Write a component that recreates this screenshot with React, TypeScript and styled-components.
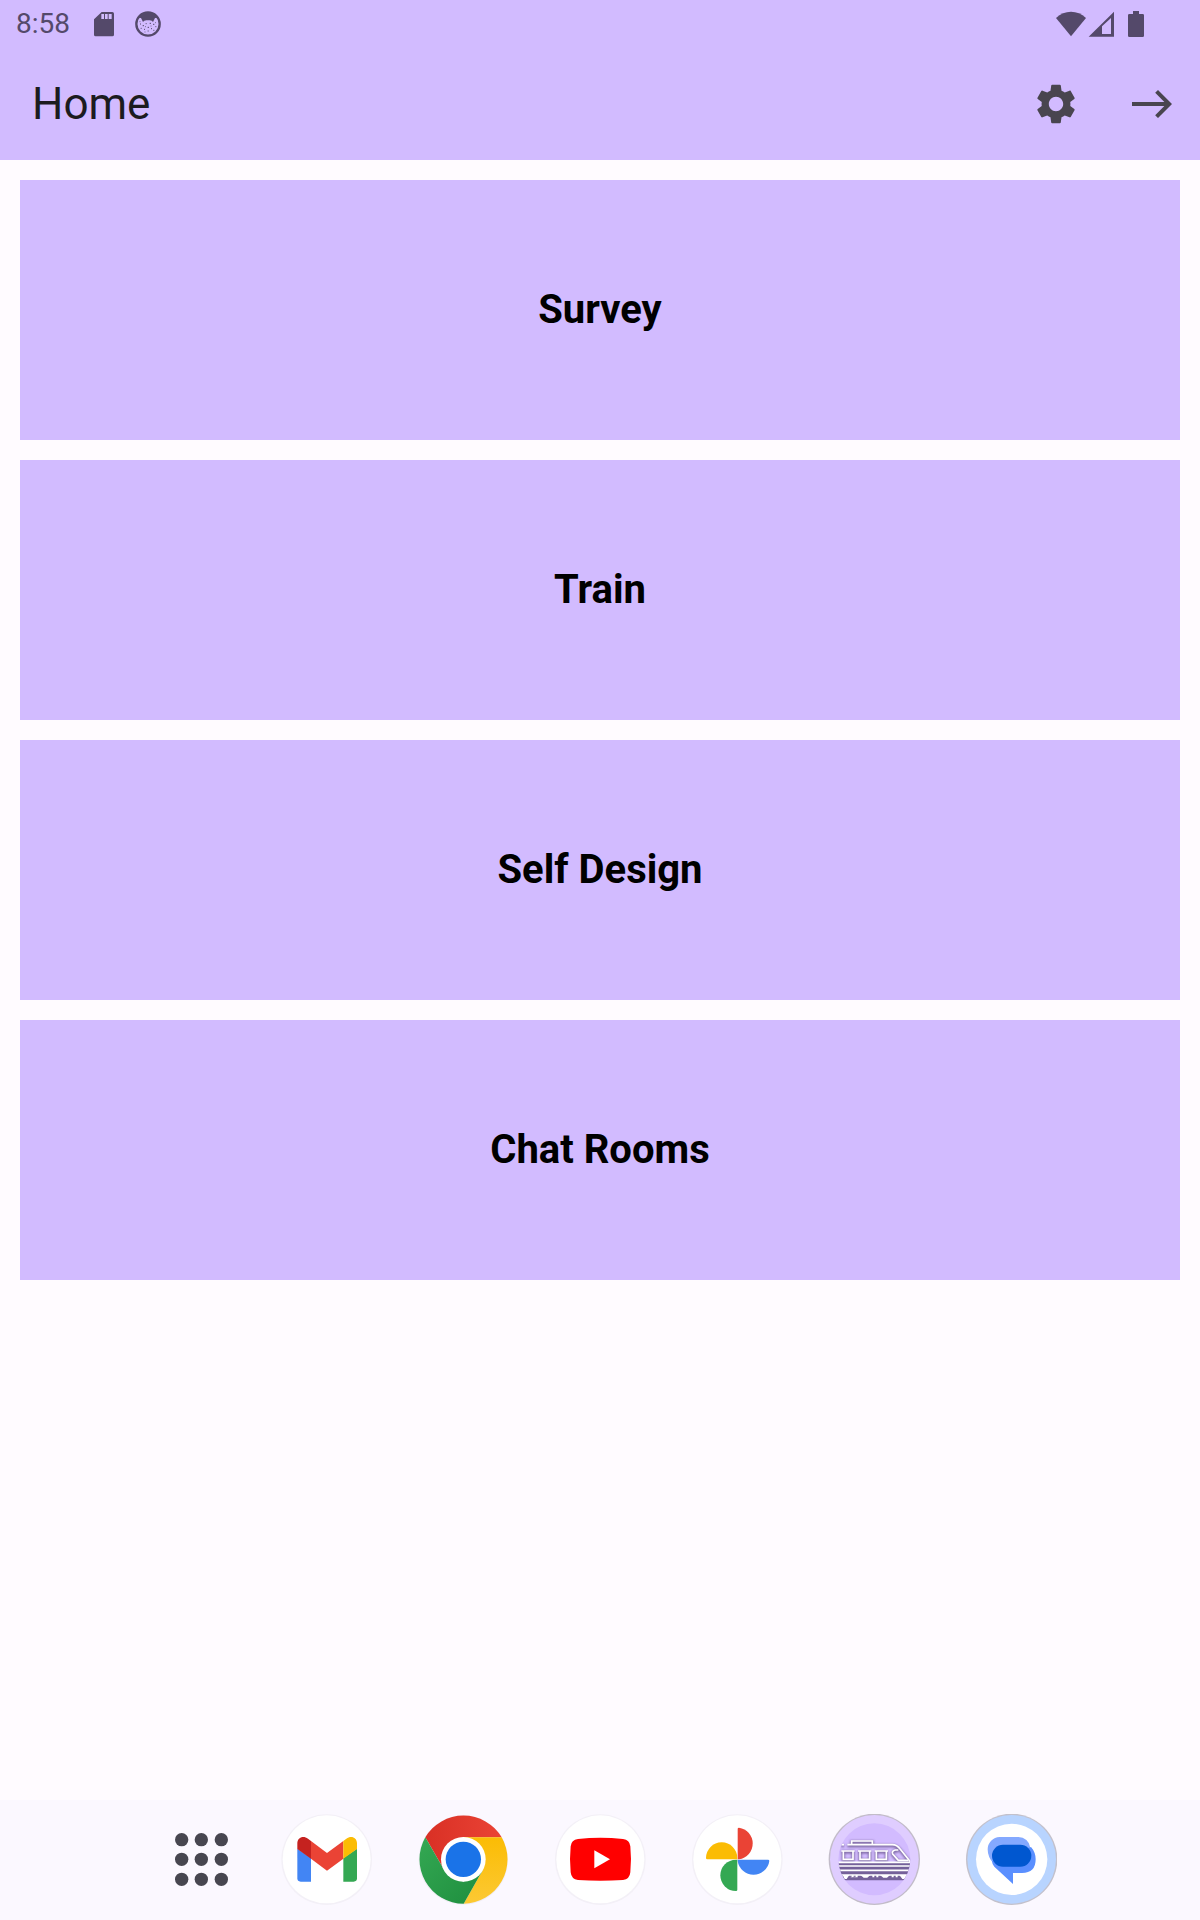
import React from "react";
import styled, { createGlobalStyle } from "styled-components";

const GlobalStyle = createGlobalStyle`
  *, *::before, *::after { box-sizing: border-box; }
  body {
    margin: 0;
    background: #fffbff;
    font-family: Roboto, "Noto Sans", sans-serif;
  }
`;

const Screen = styled.div`
  display: flex;
  flex-direction: column;
  min-height: 100vh;
`;

const Header = styled.header`
  background: #d2bbff;
`;

const StatusBar = styled.div`
  display: flex;
  align-items: center;
  justify-content: space-between;
  height: 48px;
  padding: 0 56px 0 16px;
  color: #54496a;
`;

const StatusGroup = styled.div<{ $gap: number }>`
  display: flex;
  align-items: center;
  gap: ${(p) => p.$gap}px;
`;

const Clock = styled.time`
  font-size: 28px;
  line-height: 32px;
`;

const Glyph = styled.svg<{ $w: number; $h: number }>`
  display: block;
  flex: none;
  width: ${(p) => p.$w}px;
  height: ${(p) => p.$h}px;
  fill: currentColor;
`;

const AppBar = styled.div`
  display: flex;
  align-items: center;
  justify-content: space-between;
  height: 112px;
  padding-left: 32px;
`;

const Title = styled.h1`
  margin: 0;
  color: #1c1b1f;
  font-size: 44px;
  font-weight: 400;
  line-height: 56px;
`;

const Actions = styled.div`
  display: flex;
`;

const IconButton = styled.button`
  display: flex;
  align-items: center;
  justify-content: center;
  width: 96px;
  height: 96px;
  padding: 0;
  border: 0;
  background: none;
  color: #49454f;
  cursor: pointer;
`;

const Menu = styled.main`
  display: flex;
  flex: 1;
  flex-direction: column;
  gap: 20px;
  padding: 20px;
`;

const MenuCard = styled.button`
  height: 260px;
  padding: 0;
  border: 0;
  background: #d2bbff;
  color: #000;
  font-family: inherit;
  font-size: 40px;
  font-weight: 700;
  line-height: 48px;
  cursor: pointer;
`;

const Dock = styled.nav`
  display: flex;
  align-items: center;
  justify-content: center;
  gap: 45px;
  height: 120px;
  padding-left: 24px;
  background: #fbf8ff;
`;

const DockButton = styled.button`
  display: block;
  padding: 0;
  border: 0;
  background: none;
  cursor: pointer;
`;

const Disc = ({ cx, cy, fill = "#fff" }: { cx: number; cy: number; fill?: string }) => (
  <>
    <circle cx={cx} cy={cy + 1} r="136" fill="#f3f0f7" />
    <circle cx={cx} cy={cy} r="132" fill={fill} />
  </>
);

const SdCard = () => (
  <Glyph $w={20} $h={26} viewBox="282 33 60 78" aria-hidden="true">
    <path
      fillRule="evenodd"
      d="M305 36H337Q342 36 342 41V104Q342 109 337 109H287Q282 109 282 104V58ZM304 42V57H312V42ZM315 42V57H323V42ZM326 42V57H335V42Z"
    />
  </Glyph>
);

const Face = () => (
  <Glyph $w={26} $h={26} viewBox="405 33 78 78" aria-hidden="true">
    <circle cx="444" cy="72" r="35" fill="none" stroke="currentColor" strokeWidth="7" />
    <path d="M415 53Q426 37 444 37T473 53L465 54L459 66Q456 59 444 61Q432 59 429 66L423 54Z" />
    <path
      d="M420 72h3M428 77h4M437 71h3M449 70h4M459 73h4M466 80h3M422 85h3M432 88h3M443 82h4M443 93h3M453 86h3M460 91h3M434 96h2M466 68h2M419 65h2M452 78h2M436 80h2"
      stroke="currentColor"
      strokeWidth="3"
    />
  </Glyph>
);

const Wifi = () => (
  <Glyph $w={30} $h={26} viewBox="168 33 90 78" aria-hidden="true">
    <path d="M168 54Q188 35 213 35T258 54L213 109Z" />
  </Glyph>
);

const Signal = () => (
  <Glyph $w={26} $h={26} viewBox="264 33 78 78" aria-hidden="true">
    <path fillRule="evenodd" d="M266 110L342 35V110ZM306 79V102H333V54Z" />
  </Glyph>
);

const Battery = () => (
  <Glyph $w={16} $h={26} viewBox="384 33 48 78" aria-hidden="true">
    <path d="M399 33H417V42H428Q432 42 432 46V107Q432 111 428 111H388Q384 111 384 107V46Q384 42 388 42H399Z" />
  </Glyph>
);

const Gear = () => (
  <Glyph $w={48} $h={48} viewBox="0 0 24 24" aria-hidden="true">
    <path d="M19.14 12.94c.04-.3.06-.61.06-.94 0-.32-.02-.64-.07-.94l2.03-1.58c.18-.14.23-.41.12-.61l-1.92-3.32c-.12-.22-.37-.29-.59-.22l-2.39.96c-.5-.38-1.03-.7-1.62-.94l-.36-2.54c-.04-.24-.24-.41-.48-.41h-3.84c-.24 0-.43.17-.47.41l-.36 2.54c-.59.24-1.13.57-1.62.94l-2.39-.96c-.22-.08-.47 0-.59.22L2.74 8.87c-.12.21-.08.47.12.61l2.03 1.58c-.05.3-.09.63-.09.94s.02.64.07.94l-2.03 1.58c-.18.14-.23.41-.12.61l1.92 3.32c.12.22.37.29.59.22l2.39-.96c.5.38 1.03.7 1.62.94l.36 2.54c.05.24.24.41.48.41h3.84c.24 0 .44-.17.47-.41l.36-2.54c.59-.24 1.13-.56 1.62-.94l2.39.96c.22.08.47 0 .59-.22l1.92-3.32c.12-.22.07-.47-.12-.61l-2.01-1.58zM12 15.6c-1.98 0-3.6-1.62-3.6-3.6s1.62-3.6 3.6-3.6 3.6 1.62 3.6 3.6-1.62 3.6-3.6 3.6z" />
  </Glyph>
);

const East = () => (
  <Glyph $w={48} $h={48} viewBox="0 0 24 24" aria-hidden="true">
    <path d="M15 5l-1.41 1.41L18.17 11H2v2h16.17l-4.59 4.59L15 19l7-7-7-7z" />
  </Glyph>
);

const AllApps = () => (
  <Glyph $w={68} $h={92} viewBox="21 72 204 276" aria-hidden="true">
    <g fill="#474650">
      {[149, 208, 268].map((y) =>
        [65, 124, 184].map((x) => <circle key={`${x}-${y}`} cx={x} cy={y} r="20" />)
      )}
    </g>
  </Glyph>
);

const Gmail = () => (
  <Glyph $w={92} $h={92} viewBox="360 72 276 276" aria-hidden="true">
    <Disc cx={500} cy={208} />
    <path fill="#4285f4" d="M412 176L453 204V275H422Q412 275 412 265Z" />
    <path fill="#34a853" d="M591 176L550 204V275H581Q591 275 591 265Z" />
    <path fill="#ea4335" d="M453 153L501 189L550 153V206L501 242L453 206Z" />
    <path fill="#c5221f" d="M412 177V160C412 142 430 135 444 146L453 153V206Z" />
    <path fill="#fbbc04" d="M591 177V160C591 142 573 135 559 146L550 153V206Z" />
  </Glyph>
);

const Chrome = () => (
  <Glyph $w={92} $h={92} viewBox="51 72 276 276" aria-hidden="true">
    <defs>
      <linearGradient id="chromeRed" x1="0" x2="1">
        <stop offset="0" stopColor="#d93025" />
        <stop offset="1" stopColor="#ea4335" />
      </linearGradient>
      <linearGradient id="chromeYellow" x1="0" y1="1" x2="0" y2="0">
        <stop offset="0" stopColor="#fcc934" />
        <stop offset="1" stopColor="#fbbc04" />
      </linearGradient>
      <linearGradient id="chromeGreen" x1="0" y1="0" x2="1" y2="1">
        <stop offset="0" stopColor="#34a853" />
        <stop offset="1" stopColor="#1e8e3e" />
      </linearGradient>
    </defs>
    <circle cx="190" cy="210" r="134" fill="#f0edf5" />
    <path fill="url(#chromeRed)" d="M76 142A133 133 0 0 1 305 142H190L133 241Z" />
    <path fill="url(#chromeYellow)" d="M305 142A133 133 0 0 1 191 341L248 241L190 142Z" />
    <path fill="url(#chromeGreen)" d="M191 341A133 133 0 0 1 76 142L133 241L190 275L248 241Z" />
    <circle cx="190" cy="208" r="67" fill="#fff" />
    <circle cx="190" cy="208" r="53" fill="#1a73e8" />
  </Glyph>
);

const YouTube = () => (
  <Glyph $w={92} $h={92} viewBox="462 72 276 276" aria-hidden="true">
    <Disc cx={601} cy={208} />
    <path
      fill="#f00"
      d="M534 147Q601 140 669 147Q689 149 691 169Q695 208 691 247Q689 268 669 270Q601 275 534 270Q514 268 512 247Q508 208 512 169Q514 149 534 147Z"
    />
    <path fill="#fff" d="M583 181L630 208L583 235Z" />
  </Glyph>
);

const Photos = () => (
  <Glyph $w={92} $h={92} viewBox="33 72 276 276" aria-hidden="true">
    <Disc cx={172} cy={208} />
    <path fill="#ea4335" d="M173 208V117Q173 113 177 113A48 48 0 0 1 177 208Z" />
    <path fill="#4285f4" d="M173 209H264Q268 209 268 213A48 48 0 0 1 173 213Z" />
    <path fill="#34a853" d="M172 209V299Q172 303 168 303A47 47 0 0 1 168 209Z" />
    <path fill="#fbbc04" d="M172 208H82Q78 208 78 204A47 47 0 0 1 172 204Z" />
  </Glyph>
);

const TrainOutline = () => (
  <>
    <path d="M97 134H232Q246 134 256 148L286 185" />
    <path d="M110 134V123H172V134M79 134H87" />
    <path d="M79 153H119M85 153V178H114V153M129 153H169M135 153V178H164V153M179 153H219M184 153V178H214V153" />
    <path d="M250 150H241Q229 153 233 162L250 181H280" />
  </>
);

const TrainApp = () => (
  <Glyph $w={92} $h={92} viewBox="39 42 276 276" aria-hidden="true">
    <defs>
      <clipPath id="trainClip">
        <circle cx="178" cy="178" r="108" />
      </clipPath>
      <filter id="trainShade" x="-10%" y="-20%" width="120%" height="150%">
        <feGaussianBlur stdDeviation="3" />
      </filter>
    </defs>
    <circle cx="178" cy="178" r="137" fill="#c2bcc9" />
    <circle cx="178" cy="178" r="133" fill="#dfcdff" />
    <circle cx="178" cy="178" r="108" fill="#d2bbff" />
    <g clipPath="url(#trainClip)">
      <g filter="url(#trainShade)" fill="none" stroke="#5f4d80" strokeWidth="9" opacity="0.75" transform="translate(0 3)">
        <TrainOutline />
      </g>
      <path d="M70 188H288V241H70Z" fill="#75619a" />
      <g fill="none" stroke="#fff" strokeWidth="5">
        <TrainOutline />
        <path d="M70 187H288M70 198H288M70 211H288M70 225H288" />
      </g>
      <path
        fill="#fff"
        d="M83 225H103L95 237H89ZM107 230H111V232H107ZM118 230H124V232H118ZM110 225H116V232H110ZM122 225H128V232H122ZM136 225H166L157 233H146ZM172 225H178V232H172ZM184 225H190V232H184ZM195 225H225L216 233H205ZM230 225H236V232H230ZM242 225H248V232H242ZM253 225H278L268 237H262Z"
      />
    </g>
  </Glyph>
);

const Messages = () => (
  <Glyph $w={92} $h={92} viewBox="45 42 276 276" aria-hidden="true">
    <circle cx="185" cy="178" r="137" fill="#c3c1cc" />
    <circle cx="185" cy="178" r="133" fill="#b8d4ff" />
    <circle cx="185" cy="178" r="107" fill="#fff" />
    <path fill="#84a9ff" d="M149 111H205A36 36 0 0 1 241 143L130 190Q113 171 113 148A37 37 0 0 1 149 111Z" />
    <path fill="#5a8fff" d="M243 141Q257 157 257 178Q257 219 216 219H189V252L133 200Q126 192 126 183Z" />
    <rect x="126" y="134" width="118" height="66" rx="33" fill="#0057d0" />
  </Glyph>
);

const menuItems = ["Survey", "Train", "Self Design", "Chat Rooms"];

const dockApps = [
  { name: "All apps", Icon: AllApps },
  { name: "Gmail", Icon: Gmail },
  { name: "Chrome", Icon: Chrome },
  { name: "YouTube", Icon: YouTube },
  { name: "Photos", Icon: Photos },
  { name: "Train", Icon: TrainApp },
  { name: "Messages", Icon: Messages },
];

export default function App() {
  return (
    <Screen>
      <GlobalStyle />
      <Header>
        <StatusBar>
          <StatusGroup $gap={21}>
            <StatusGroup $gap={24}>
              <Clock>8:58</Clock>
              <SdCard />
            </StatusGroup>
            <Face />
          </StatusGroup>
          <StatusGroup $gap={14}>
            <StatusGroup $gap={2}>
              <Wifi />
              <Signal />
            </StatusGroup>
            <Battery />
          </StatusGroup>
        </StatusBar>
        <AppBar>
          <Title>Home</Title>
          <Actions>
            <IconButton type="button" aria-label="Settings">
              <Gear />
            </IconButton>
            <IconButton type="button" aria-label="Next">
              <East />
            </IconButton>
          </Actions>
        </AppBar>
      </Header>
      <Menu>
        {menuItems.map((label) => (
          <MenuCard key={label} type="button">
            {label}
          </MenuCard>
        ))}
      </Menu>
      <Dock aria-label="Dock">
        {dockApps.map(({ name, Icon }) => (
          <DockButton key={name} type="button" aria-label={name}>
            <Icon />
          </DockButton>
        ))}
      </Dock>
    </Screen>
  );
}
